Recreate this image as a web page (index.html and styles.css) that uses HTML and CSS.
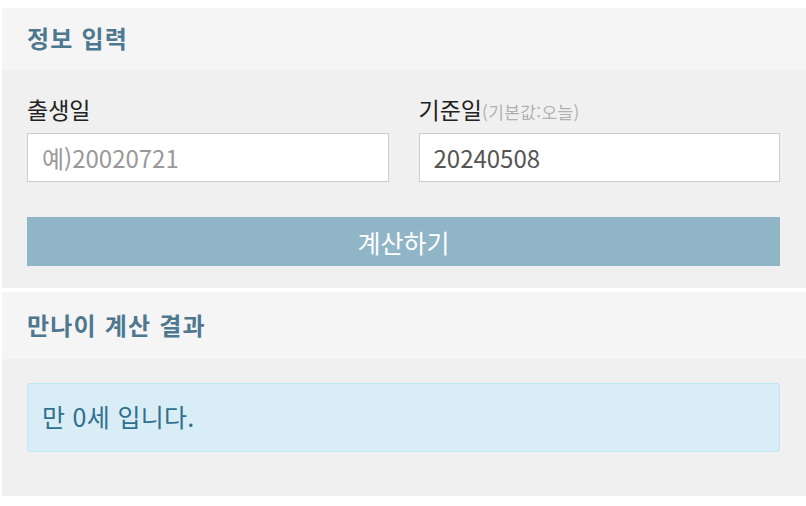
FILE: index.html
```html
<!DOCTYPE html>
<html lang="ko">
<head>
  <meta charset="UTF-8">
  <title>만나이 계산기</title>
  <link rel="stylesheet" href="styles.css">
</head>
<body>

  <section class="panel">
    <h3 class="panel-head">정보 입력</h3>
    <div class="panel-body form-body">
      <div class="row">
        <label class="field">
          <span class="label">출생일</span>
          <input type="text" placeholder="예)20020721">
        </label>
        <label class="field">
          <span class="label">기준일<small>(기본값:오늘)</small></span>
          <input type="text" value="20240508">
        </label>
      </div>
      <button type="button" class="calc-btn">계산하기</button>
    </div>
  </section>

  <section class="panel">
    <h3 class="panel-head tall">만나이 계산 결과</h3>
    <div class="panel-body result-body">
      <div class="alert">만 0세 입니다.</div>
    </div>
  </section>

</body>
</html>
```

FILE: styles.css
```css
body { margin:8px 0 0 2px; font-family:"Noto Sans CJK KR", "Noto Sans", sans-serif; color:#333; }
.panel { background:#f0f0f0; margin-bottom:4px; }
.panel-head { margin:0; height:62px; line-height:60px; padding:0 25px; background:#f5f5f5; font-size:24px; font-weight:bold; color:#4e7890; letter-spacing:1.2px; }
.panel-head.tall { height:67px; line-height:66px; }
.panel-body { padding:0 26px 0 25px; }
.form-body { padding-top:26px; padding-bottom:22px; }
.row { display:flex; gap:30px; }
.field { flex:1; display:block; }
.label { display:block; height:26px; font-size:23px; line-height:26px; margin-bottom:11px; color:#222; white-space:nowrap; }
.label small { font-size:17px; color:#b0b0b0; letter-spacing:.4px; }
input[type="text"] { display:block; width:100%; height:49px; box-sizing:border-box; border:1px solid #ccc; background:#fff; padding:0 14px; font-family:inherit; font-size:24px; color:#555; outline:none; }
input::placeholder { color:#999; }
.calc-btn { display:block; width:100%; height:49px; margin-top:35px; border:none; background:#8fb5c7; color:#fff; font-family:inherit; font-size:25px; cursor:pointer; }
.result-body { padding-top:24px; padding-bottom:44px; }
.alert { height:69px; box-sizing:border-box; border:1px solid #bce8f1; border-radius:3px; background:#d9edf7; color:#31708f; font-size:25px; line-height:65px; padding:0 14px; letter-spacing:.3px; }
```
